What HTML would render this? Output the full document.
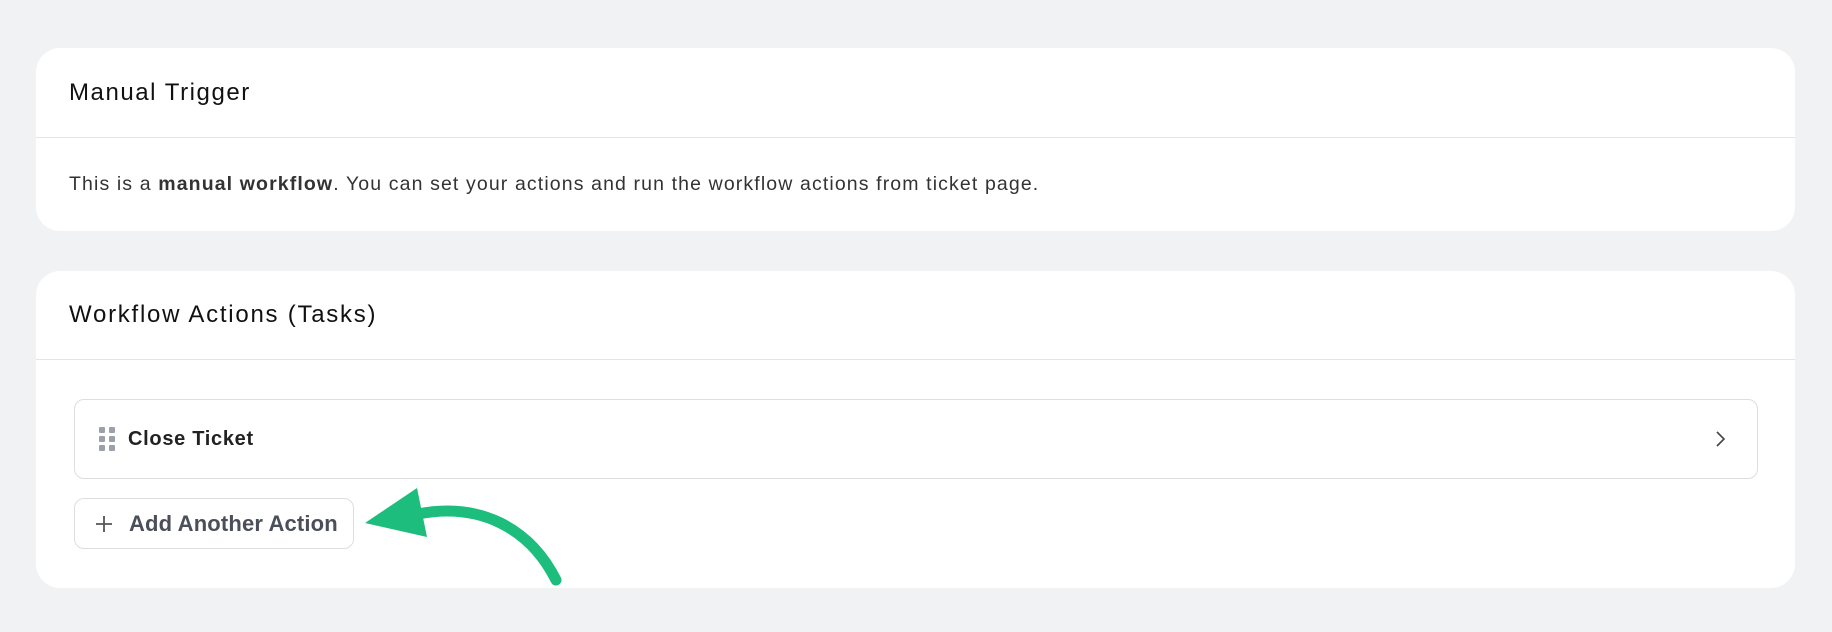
<!DOCTYPE html>
<html><head><meta charset="utf-8"><style>
body{margin:0;width:1832px;height:632px;background:#f1f2f4;font-family:"Liberation Sans",sans-serif;position:relative;overflow:hidden}
.card{position:absolute;left:36px;width:1759px;background:#fff;border-radius:24px}
.hd{height:90px;border-bottom:1px solid #e3e5e8;box-sizing:border-box;display:flex;align-items:center;padding-left:33px;font-size:24px;color:#111;font-weight:500;letter-spacing:1.55px}
.body{padding-left:33px;font-size:19.5px;color:#333;letter-spacing:1.12px}
.box{position:absolute;left:38px;border:1px solid #dcdee2;border-radius:10px;box-sizing:border-box;background:#fff}
</style></head><body>
<div class="card" style="top:48px;height:183px">
  <div class="hd">Manual Trigger</div>
  <div class="body" style="line-height:92px">This is a <b>manual workflow</b>. You can set your actions and run the workflow actions from ticket page.</div>
</div>
<div class="card" style="top:271px;height:317px">
  <div class="hd" style="height:89px;letter-spacing:1.75px">Workflow Actions (Tasks)</div>
  <div class="box" style="top:128px;width:1684px;height:80px;display:flex;align-items:center">
    <svg width="22" height="26" style="margin-left:23px" viewBox="0 0 22 26"><g fill="#9ca0a8"><rect x="1" y="1" width="6" height="6" rx="1"/><rect x="11" y="1" width="6" height="6" rx="1"/><rect x="1" y="10" width="6" height="6" rx="1"/><rect x="11" y="10" width="6" height="6" rx="1"/><rect x="1" y="19" width="6" height="6" rx="1"/><rect x="11" y="19" width="6" height="6" rx="1"/></g></svg>
    <span style="margin-left:8px;font-size:20px;font-weight:600;color:#222;letter-spacing:0.7px">Close Ticket</span>
    <svg width="14" height="20" style="position:absolute;right:30px" viewBox="0 0 14 20"><path d="M4 3l7 7-7 7" fill="none" stroke="#444" stroke-width="1.6"/></svg>
  </div>
  <div class="box" style="top:227px;width:280px;height:51px;display:flex;align-items:center">
    <svg width="20" height="20" style="margin-left:19px" viewBox="0 0 20 20"><path d="M10 2v16M2 10h16" stroke="#555" stroke-width="1.8"/></svg>
    <span style="margin-left:15px;font-size:22px;font-weight:600;color:#4b4f5a;letter-spacing:0.15px;white-space:nowrap">Add Another Action</span>
  </div>
</div>
<svg width="1832" height="632" style="position:absolute;left:0;top:0">
  <path d="M418 514 C480 502,530 528,556 580" fill="none" stroke="#1dbd7d" stroke-width="11" stroke-linecap="round"/>
  <polygon points="365,523 417,488 427,537" fill="#1dbd7d"/>
</svg>
</body></html>
